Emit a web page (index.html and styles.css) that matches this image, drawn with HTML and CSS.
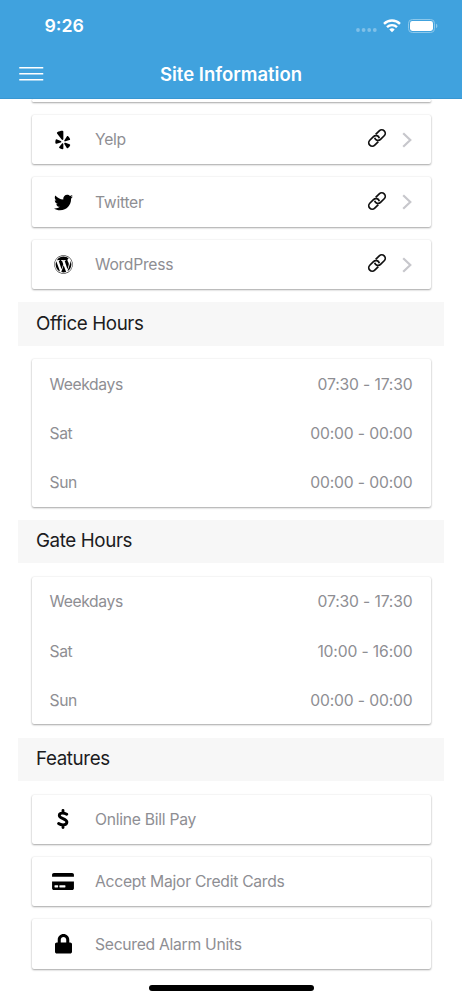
FILE: index.html
```
<!DOCTYPE html>
<html lang="en">
<head>
<meta charset="utf-8">
<title>Site Information</title>
<link rel="stylesheet" href="styles.css">
</head>
<body>
<svg class="defs" aria-hidden="true">
  <symbol id="link" viewBox="0 0 20 20">
    <g fill="none" stroke="#111" stroke-width="1.7" transform="rotate(-45 10 10)">
      <path d="M8.4 13.5H3.300a3.500 3.500 0 0 1 0-7h5.200a3.500 3.500 0 0 1 3 5.300"/>
      <path d="M11.600 6.500h5.100a3.500 3.500 0 0 1 0 7h-5.200a3.500 3.500 0 0 1-3-5.300"/>
    </g>
  </symbol>
  <symbol id="chevron" viewBox="0 0 10 16"><path d="M1.2 1.2 8.3 8l-7.1 6.8" fill="none" stroke="#c7c7cc" stroke-width="2.2"/></symbol>
</svg>
<div class="screen">
  <header class="header">
    <div class="status">
      <span class="time">9:26</span>
      <span class="signals">
        <svg class="dots" viewBox="0 0 22 4"><g fill="#7fc0e8"><circle cx="2" cy="2" r="1.9"/><circle cx="7.6" cy="2" r="1.9"/><circle cx="13.2" cy="2" r="1.9"/><circle cx="18.8" cy="2" r="1.9"/></g></svg>
        <svg class="wifi" viewBox="0 0 18 14"><g fill="none" stroke="#fff" stroke-width="2.4"><path d="M1 4.8a11.5 11.5 0 0 1 16 0"/><path d="M4 8.1a7.2 7.2 0 0 1 10 0"/></g><path d="M6.3 10.6a4 4 0 0 1 5.4 0L9 13.3z" fill="#fff"/></svg>
        <svg class="battery" viewBox="0 0 30 14"><rect x=".5" y=".5" width="26" height="13" rx="3.8" fill="none" stroke="#8cc8eb"/><rect x="2" y="2" width="23" height="10" rx="2.4" fill="#fff"/><path d="M28 4.8c1.8.6 1.8 3.8 0 4.4z" fill="#8cc8eb"/></svg>
      </span>
    </div>
    <div class="bar">
      <svg class="menu" viewBox="0 0 24 16"><path d="M0 1.700h24M0 7.700h24M0 13.700h24" stroke="#fff" stroke-width="1.6"/></svg>
      <h1 class="title">Site Information</h1>
    </div>
  </header>
  <main class="content">
    <div class="card-tail"></div>
    <div class="cards">
      <div class="card row">
        <span class="icon"><svg class="glyph yelp" viewBox="0 0 18 22"><path d="M2.600 2.400C4.500 1.200 6.900.6 8.400.7c.7.1 1 .5 1 1.100v8.200c0 1.200-1.300 1.400-1.900.5L2.300 3.700c-.3-.5-.3-.9.3-1.300zM1.700 10.200l4.800 1.800c1 .4.900 1.600-.1 1.900l-4.700 1.400c-.7.2-1.200-.2-1.300-.8-.1-1.200 0-2.500.3-3.500.2-.6.5-1 1-.8zM7.700 15.100c.7-.8 1.700-.4 1.700.5v5c0 .7-.5 1-1.200.9-1.200-.2-2.400-.7-3.300-1.500-.5-.4-.5-.9 0-1.400zM11.800 14.100l4.600 1.600c.7.300.9.800.6 1.500-.5 1.100-1.400 2.100-2.400 2.800-.6.4-1.100.2-1.500-.4l-2.600-4c-.5-.9.3-1.800 1.300-1.500zM10.600 11.200l2.700-4.100c.4-.6.9-.6 1.500-.2.9.7 1.700 1.900 2.100 2.900.2.6 0 1.100-.7 1.300l-4.500 1.400c-1 .3-1.700-.5-1.100-1.300z"/></svg></span>
        <span class="label">Yelp</span><svg class="link"><use href="#link"/></svg><svg class="chevron"><use href="#chevron"/></svg>
      </div>
      <div class="card row">
        <span class="icon"><svg class="glyph brand" viewBox="0 0 512 512"><path d="M459.37 151.716c.325 4.548.325 9.097.325 13.645 0 138.72-105.583 298.558-298.558 298.558-59.452 0-114.68-17.219-161.137-47.106 8.447.974 16.568 1.299 25.34 1.299 49.055 0 94.213-16.568 130.274-44.832-46.132-.975-84.792-31.188-98.112-72.772 6.498.974 12.995 1.624 19.818 1.624 9.421 0 18.843-1.3 27.614-3.573-48.081-9.747-84.143-51.98-84.143-102.985v-1.299c13.969 7.797 30.214 12.67 47.431 13.319-28.264-18.843-46.781-51.005-46.781-87.391 0-19.492 5.197-37.36 14.294-52.954 51.655 63.675 129.3 105.258 216.365 109.807-1.624-7.797-2.599-15.918-2.599-24.04 0-57.828 46.782-104.934 104.934-104.934 30.213 0 57.502 12.67 76.67 33.137 23.715-4.548 46.456-13.32 66.599-25.34-7.798 24.366-24.366 44.833-46.132 57.827 21.117-2.273 41.584-8.122 60.426-16.243-14.292 20.791-32.161 39.308-52.628 54.253z"/></svg></span>
        <span class="label">Twitter</span><svg class="link"><use href="#link"/></svg><svg class="chevron"><use href="#chevron"/></svg>
      </div>
      <div class="card row">
        <span class="icon"><svg class="glyph brand" viewBox="0 0 512 512"><path d="M61.7 169.4l101.5 278C92.2 413 43.3 340.2 43.3 256c0-30.9 6.6-60.1 18.4-86.6zm337.9 75.9c0-26.3-9.4-44.5-17.5-58.7-10.8-17.5-20.9-32.4-20.9-49.9 0-19.6 14.8-37.8 35.7-37.8.9 0 1.8.1 2.8.2-37.9-34.7-88.3-55.9-143.7-55.9-74.3 0-139.7 38.1-177.8 95.9 5 .2 9.7.3 13.7.3 22.2 0 56.7-2.7 56.7-2.7 11.5-.7 12.8 16.2 1.4 17.5 0 0-11.5 1.3-24.3 2l77.5 230.4L249.8 247l-33.1-90.8c-11.5-.7-22.3-2-22.3-2-11.5-.7-10.1-18.2 1.3-17.5 0 0 35.1 2.7 56 2.7 22.2 0 56.7-2.7 56.7-2.7 11.5-.7 12.8 16.2 1.4 17.5 0 0-11.5 1.3-24.3 2l76.9 228.7 21.2-70.9c9-29.4 16-50.5 16-68.7zm-139.9 29.3l-63.8 185.5c19.1 5.6 39.2 8.7 60.1 8.7 24.8 0 48.5-4.3 70.6-12.1-.6-.9-1.1-1.9-1.5-2.9l-65.4-179.2zm183-120.7c.9 6.8 1.4 14 1.4 21.9 0 21.6-4 45.8-16.2 76.2l-65 187.9C426.2 403 468.7 334.5 468.7 256c0-37-9.4-71.8-26-102.1zM504 256c0 136.8-111.3 248-248 248C119.2 504 8 392.7 8 256 8 119.2 119.2 8 256 8c136.7 0 248 111.2 248 248zm-11.4 0c0-130.5-106.2-236.6-236.6-236.6C125.5 19.4 19.4 125.5 19.4 256S125.6 492.6 256 492.6c130.5 0 236.6-106.1 236.6-236.6z"/></svg></span>
        <span class="label">WordPress</span><svg class="link"><use href="#link"/></svg><svg class="chevron"><use href="#chevron"/></svg>
      </div>
    </div>
    <h2 class="section">Office Hours</h2>
    <div class="cards">
      <div class="card hours">
        <div class="hour"><span>Weekdays</span><span class="range">07:30 - 17:30</span></div>
        <div class="hour"><span>Sat</span><span class="range">00:00 - 00:00</span></div>
        <div class="hour"><span>Sun</span><span class="range">00:00 - 00:00</span></div>
      </div>
    </div>
    <h2 class="section">Gate Hours</h2>
    <div class="cards">
      <div class="card hours">
        <div class="hour"><span>Weekdays</span><span class="range">07:30 - 17:30</span></div>
        <div class="hour"><span>Sat</span><span class="range">10:00 - 16:00</span></div>
        <div class="hour"><span>Sun</span><span class="range">00:00 - 00:00</span></div>
      </div>
    </div>
    <h2 class="section">Features</h2>
    <div class="cards">
      <div class="card row">
        <span class="icon"><svg class="glyph dollar" viewBox="0 0 12 20"><path d="M9.700 5.300C8.400 4.500 6.800 4.100 5.300 4.100c-1.700 0-3 .8-3 2.300 0 3.500 7.600 2.900 7.600 6.700 0 1.900-1.600 2.800-3.800 2.800-1.700 0-3.300-.5-4.500-1.400M6 1.500v2.600M6 15.900v2.600" fill="none" stroke="#000" stroke-width="2.900" stroke-linecap="round" stroke-linejoin="round"/></svg></span>
        <span class="label">Online Bill Pay</span>
      </div>
      <div class="card row">
        <span class="icon"><svg class="glyph credit" viewBox="0 0 576 448"><path fill-rule="evenodd" d="M0 400c0 26.500 21.500 48 48 48h480c26.500 0 48-21.500 48-48V224H0zm192-68c0-6.600 5.400-12 12-12h136c6.600 0 12 5.400 12 12v40c0 6.600-5.400 12-12 12H204c-6.600 0-12-5.400-12-12zm-128 0c0-6.600 5.400-12 12-12h72c6.600 0 12 5.400 12 12v40c0 6.600-5.400 12-12 12H76c-6.600 0-12-5.400-12-12zM576 48v48H0V48C0 21.500 21.500 0 48 0h480c26.500 0 48 21.500 48 48z"/></svg></span>
        <span class="label">Accept Major Credit Cards</span>
      </div>
      <div class="card row">
        <span class="icon"><svg class="glyph lock" viewBox="0 0 448 512"><path d="M400 224h-24v-72C376 68.200 307.800 0 224 0S72 68.200 72 152v72H48c-26.500 0-48 21.500-48 48v192c0 26.500 21.500 48 48 48h352c26.500 0 48-21.500 48-48V272c0-26.500-21.500-48-48-48zm-104 0H152v-72c0-39.700 32.300-72 72-72s72 32.300 72 72z"/></svg></span>
        <span class="label">Secured Alarm Units</span>
      </div>
    </div>
  </main>
  <div class="home"></div>
</div>
</body>
</html>
```
FILE: styles.css
```
* { box-sizing: border-box; }
body { margin: 0; background: #fff; font-family: Inter, "Liberation Sans", sans-serif; }
.defs { position: absolute; width: 0; height: 0; }
.screen { height: 1000px; overflow: hidden; display: flex; flex-direction: column; }
.header { flex: none; height: 98.500px; background: #40a2de; border-bottom: 1px solid #3897d2; color: #fff; }
.status { height: 50px; padding: 1px 24px 0 44.500px; display: flex; align-items: center; justify-content: space-between; }
.time { font-size: 17.800px; font-weight: 600; letter-spacing: 0; }
.signals { display: flex; align-items: center; }
.dots { width: 22px; height: 4px; margin: 9px 5px 0 0; }
.wifi { width: 18px; height: 14px; margin-right: 7px; }
.battery { width: 30px; height: 14px; }
.bar { height: 47px; padding: 0 19px; display: grid; grid-template-columns: 40px 1fr 40px; align-items: center; }
.menu { width: 24.500px; height: 16px; }
.title { margin: 0; text-align: center; font-size: 18.500px; font-weight: 600; letter-spacing: 0; }
.content { flex: none; height: 877px; padding: 0 18px; overflow: hidden; }
.card, .card-tail { background: #fff; border-radius: 2px; box-shadow: 0 1px 2px rgba(0,0,0,.33), 0 0 2px rgba(0,0,0,.1); }
.card-tail { height: 3px; margin: 0 13.500px; }
.cards { display: flex; flex-direction: column; gap: 13.200px; padding: 13.500px 13.500px 13.300px; }
.row { height: 49.250px; display: flex; align-items: center; padding-right: 19px; color: #8e8e93; }
.icon { width: 63.500px; display: flex; justify-content: center; }
.glyph { display: block; fill: #000; }
.yelp { width: 16px; height: 20px; }
.brand { width: 19px; height: 19px; }
.dollar { width: 12px; height: 20px; }
.credit { width: 22px; height: 17px; }
.lock { width: 17px; height: 19.500px; }
.label { flex: 1; font-size: 15.700px; letter-spacing: -.28px; }
.link { width: 20px; height: 20px; margin: -3px 15px 0 0; }
.chevron { width: 10px; height: 16px; }
.section { margin: 0; height: 43.300px; padding: 0 18px 2px; display: flex; align-items: center; background: #f7f7f7; color: #1c1c1e; font-size: 18.800px; font-weight: 400; letter-spacing: -.4px; }
.hours { color: #8e8e93; font-size: 15.700px; padding: 0 18px; }
.hour { height: 49.200px; padding-top: 1px; display: flex; align-items: center; justify-content: space-between; letter-spacing: -.4px; }
.range { letter-spacing: -.15px; }
.home { flex: none; width: 165px; height: 5.500px; margin: 9.500px auto 0; border-radius: 3px; background: #000; }
```
